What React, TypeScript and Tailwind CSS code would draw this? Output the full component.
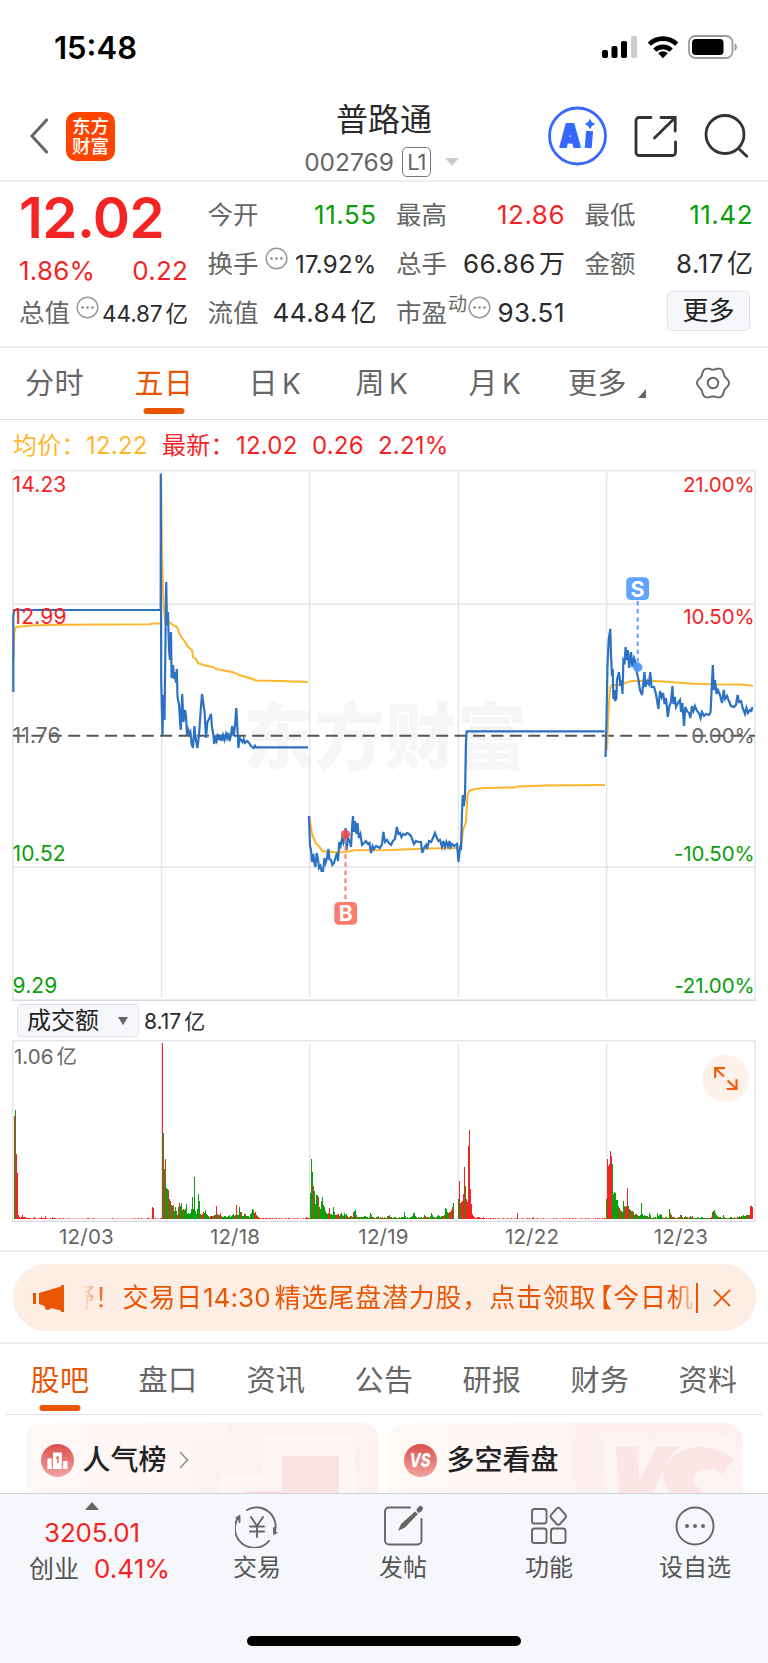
import type { ReactNode } from "react";

type Tone = "up" | "down" | "plain";
type ValueSize = "sm" | "md" | "lg";

const TONE_CLASS: Record<Tone, string> = {
  up: "text-[#f52424]",
  down: "text-[#0a9e0a]",
  plain: "text-[#2b2b2b]",
};

const SIZE_CLASS: Record<ValueSize, string> = {
  sm: "pt-[3px] text-[22.5px] tracking-[-0.1px]",
  md: "pt-[3px] text-[24px] tracking-[0.2px]",
  lg: "text-[26px] tracking-[0.5px]",
};

const UP = "#f52424";
const DOWN = "#0a9e0a";
const GRID = "#e3e6ee";
const DAY_LINES = [161.5, 309.7, 458.3, 606.7];

const PRICE_LINES = [
  "13.3,692 13.3,616 14.3,610 160.7,610 160.8,473.5 161.2,680 162.5,735 163.4,695 164.5,720 166.2,582 167,625 168,612 169,650 170,660 171,632 171.6,678 173,665 174,679 175,672 176,683 176.8,669 177.5,697 179,705 180.7,730 182.2,694 183.4,722 185,710 186,716 187,735 188.2,730 189.4,734 190.4,732 191.6,744 193,748 194.4,726 195.6,738 197.4,748 199,735 200.6,712 202,694 203.4,704 204.6,712 206,738 207.4,722 209.5,718 211,714 212,727 213.5,736 214.2,744 215.4,738 216.6,741 217.8,734 219,740 220.4,735 221.5,741 223,735 224.4,740 226,734 227,738 228.4,733 229.6,741 231,735 232.2,726 233.6,736 234.8,728 236.3,708 237.4,728 238.4,748 239.6,738 241,740 242.6,742 243.8,739 245,743 247,741 249,743 251,746 253.6,748 255,745.6 256,747.4 308,747.4",
  "309,816 310,846 311,850 312,862 313.2,854 314.5,863 315.4,867 316.6,853 317.8,858 319,868 320.4,866 321.5,871 323,871 324.4,858 325.6,863 327,858 328.4,849 329.4,859 331,860 332.4,865 334,863 335.4,858 337,853 338,861 339.2,842 340.6,846 342,839 343.4,843 345,836 345.6,828 346.6,850 348,838 350,842 351,847 352.2,825 353,816 353.8,832 355,821 356.4,834 357.6,823 358.8,838 360.4,834 362,845 364,843 366,841 368,844 369.4,843 371,853 372.6,846 374,849 376,846 378,847 380,848 382,844 383.4,832 385,842 387,840 389,843 391,845 393,841 395,839 396.8,827 398.5,834 400,833 401.4,837 403,834 405,835 407,833 409,834 411,836 414,844 416,841 418,842 421,842 422.2,853 424,848 426,845 427,849 429,841 431,842 433,838 435,833 437,838 438.4,841 440,840 442,847 443.4,841 445,847 446.4,842 448,846 449.4,841 450.6,847 452,844 454,846 457,844 458.5,862 460,848 461,850 462,812 462.8,795 463.8,806 465,796 466,742 466.7,731.3 604.6,731.3",
  "605.5,757 606.5,720 607.5,665 608.7,640 610.3,629 611,655 612,676 612.7,669 613.4,699 614.4,690 615,701 616.4,698 617,680 619,672 620.4,686 621.4,680 622.5,694 623.4,660 624.6,662 625.6,647 626.6,660 627.8,650 629.2,668 631,652 632.4,667 634,658 635.4,662 637,673 638.5,680 640,690 642,695 643.5,682 644.5,672 645.5,687 647.5,681 649,684 650.2,672 651.6,687 654,687 656,694 658.4,709 660,691 661.6,697 663,693 664.6,704 666,698 667.8,717 669.4,706 671,702 672.4,686 673.4,704 674.8,697 676,707 678,703 680,700 681,712 682.4,703 684,726 685.4,707 687,711 689,713 690.4,718 692,706 693.4,711 695,706 697,711 699,713 700.5,718 702,712 704,716 706,714 709,715 710.6,712 711.6,690 712.8,665 713.8,690 715,680 716.5,694 718,690 720,695 722,703 723.8,690 725,699 727,696 728.5,700 731,706 734,707 736,705 737.6,695 739,702 741,701 743,709 745,714 746.4,708 748,713 750,710 751.4,711 752.4,707",
];

const AVERAGE_LINES = [
  "13.5,660 14.3,632 16,627 30,625.5 60,624.8 150,624.3 153,623.5 160,623.5",
  "161,475 162,560 163.5,600 165,622 169,622 173,625 177,627 180,635 185,642 188,647 192,650 193,657 196,659 198,663 205,665.5 213,667 216,669 232,672 242,676 250,678 256,680.5 280,681 308,682",
  "309.5,818 312,834 316,844 319,846 322,851 327,851.5 335,852.3 345,852 355,850.3 390,850 430,848.5 458,848",
  "461,848 463,830 466,822 467.5,795 469,791 475,789 485,788 515,787.4 517,786.5 545,785.5 605,785",
  "607,750 608,720 609.5,695 610.5,687 612,685 622,685 625,683 628,682 632,681 655,681 670,682 690,683.5 710,684.3 740,684.5 747,685 753,686",
];

// One bar per pixel, colour letter first, then its height.
const VOLUME_RUNS: { start: number; bars: string }[] = [
  {
    start: 14,
    bars: "r103 g109 r65 r46 r4 r2 r1 r2 r4 r2 r2 r2 r1 r1 r1 r1 r1 r0 r0 r1 r2 r1 r0 r0 r0 r1 r1 r2 r1 r1 r1 r3 r1 r0 r0 r0 r1 r0 r2 r1 r1 r1 r0 r0 r0 r1 r0 r0 r0 r1 r0 r0 r0 r0 r1 r0 r0 r0 r0 r0 r0 r0 r0 r0 r0 r0 r0 r0 r0 r0 r0 r0 r0 r1 r1 r0 r0 r0 r0 r1 r0 r0 r0 r0 r0 r0 r0 r0 r0 r0 r0 r0 r0 r0 r0 r0 r0 r0 r1 r0 r0 r0 r0 r0 r0 r0 r0 r0 r0 r0 r0 r0 r0 r0 r0 r0 r0 r0 r0 r0 r1 r0 r0 r0 r1 r0 r0 r1 r0 r0 r0 r0 r0 r1 r1 r0 r0 r0 r12 r11 r0 r1 r0 r0 r0 r0 r1 r1",
  },
  {
    start: 162,
    bars: "r176 g86 g50 r60 g31 g30 r29 g20 r18 g14 g13 r14 g8 g12 g8 r4 g12 r16 g13 g16 g9 r10 g9 g10 g15 g5 g6 g5 g6 g10 g22 g10 g42 g8 g5 g10 g25 g18 g5 r4 r5 r7 g6 g9 g5 g4 g3 g2 r3 r3 g3 r3 g4 r4 r13 g5 r4 g4 r6 g3 g2 g2 g3 g3 g2 g2 g3 g4 g2 g3 g4 g5 r3 g4 r14 g4 g4 g12 r7 g7 g3 g3 r5 g5 g3 g3 g3 g2 g5 g6 g10 g9 r6 r7 g4 r3 r2 r1 r1 r0 r1 r1 r0 r1 r1 r1 r0 r1 r1 r0 r1 r0 r1 r0 r1 r0 r0 r1 r0 r1 r0 r0 r0 r1 r0 r0 r1 r1 r0 r0 r0 r0 r1 r0 r0 r1 r0 r0 r0 r0 r0 r1 r0 r1 r2 r1 r1 r1",
  },
  {
    start: 310,
    bars: "g26 g60 g47 r33 g28 g15 g24 g24 r22 g12 g10 g18 g22 g14 g12 g8 g6 g5 r6 r11 g5 g5 g4 g12 g7 g4 r4 r5 r5 g3 g5 g6 g4 r3 g6 g4 g5 r3 r2 g2 r3 g3 g2 r7 g8 g9 g4 r2 g2 g2 r2 g2 g2 g2 g3 g3 g2 g2 r1 g2 g6 g4 g2 r2 r1 g1 r2 g2 g3 r1 g2 g1 r2 r1 g2 r1 g1 g3 r3 g4 g2 r2 g1 g1 g2 g2 g1 g1 r1 g2 g1 g2 g2 g2 g7 g3 g1 g2 r1 g1 g2 g2 g3 g6 g6 g3 g2 r1 g2 g1 r2 g2 g1 g2 g4 r3 r2 g2 r2 g1 g3 g6 g4 g2 r2 g1 g2 g3 g4 g3 g2 g3 g3 r3 r4 g11 g10 g7 g6 r7 r7 r9 r12 g16",
  },
  {
    start: 458,
    bars: "g20 r38 g16 r17 r18 r25 r52 g33 r20 r17 r73 r89 r30 r15 r5 r3 r2 r1 r1 r2 r2 r2 r1 r1 r1 r2 r1 r0 r1 r0 r1 r0 r1 r1 r0 r1 r0 r1 r0 r0 r1 r0 r0 r0 r0 r1 r0 r0 r0 r1 r0 r0 r0 r1 r0 r0 r0 r0 r1 r6 r0 r0 r0 r0 r1 r0 r0 r0 r0 r1 r0 r1 r0 r0 r1 r2 r0 r0 r0 r1 r0 r0 r0 r0 r0 r1 r0 r0 r0 r0 r0 r0 r0 r0 r0 r1 r0 r0 r1 r0 r0 r0 r0 r0 r0 r1 r0 r0 r1 r0 r0 r1 r0 r0 r1 r0 r0 r1 r0 r0 r0 r0 r0 r1 r0 r0 r0 r1 r0 r0 r1 r0 r0 r0 r0 r0 r0 r1 r0 r1 r0 r1 r0 r0 r1 r0 r1 r1",
  },
  {
    start: 606,
    bars: "g20 r60 r53 r55 r68 r63 g55 g25 g27 g26 g19 g19 g13 r11 r9 g8 g7 g18 g13 r12 r13 r31 g13 r10 g9 r8 g8 r7 g4 g5 r5 g4 g3 g3 g4 g16 g5 g3 g4 g3 r3 g3 g2 g6 g4 g1 r1 g2 g1 g2 g1 g6 g3 g4 g5 g4 g2 r1 g1 r2 g2 r1 g1 g10 r6 g4 g2 r2 r2 g1 g1 r1 g2 r2 r4 g4 g2 g1 r2 g3 r2 g2 r1 r2 g3 g2 r3 g1 g1 g1 g1 g2 g1 g1 g1 g2 g2 g1 g1 g1 r1 g1 g1 g1 r1 r2 r7 g8 g9 g6 g4 g3 g2 r2 g2 g1 g1 g4 g2 r1 g1 g1 g1 r1 g2 g2 g1 g1 r2 g1 g1 r2 g2 g3 g2 r3 g3 g4 g3 g3 r4 g4 r4 g4 r13 r13 r12",
  },
];

// Six-lobed outline of the settings icon
function cogPath() {
  const points: string[] = [];
  for (let deg = 0; deg < 360; deg += 5) {
    const a = (deg * Math.PI) / 180;
    const r = 14.7 + 1.3 * Math.cos(6 * a);
    points.push(`${(18 + r * Math.cos(a)).toFixed(2)} ${(18 + r * Math.sin(a)).toFixed(2)}`);
  }
  return `M${points.join("L")}Z`;
}

function StatusBar() {
  return (
    <div className="flex h-[95px] items-center justify-between pb-px pl-[54px] pr-[30px]">
      <span className="text-[31px] font-semibold leading-none text-black">15:48</span>
      <div className="flex items-center gap-[9px]">
        <svg width="37" height="24" viewBox="0 0 37 24">
          <rect x="1" y="15" width="6" height="8" rx="1.8" />
          <rect x="10.5" y="11" width="6" height="12" rx="1.8" />
          <rect x="20" y="6" width="6" height="17" rx="1.8" />
          <rect x="30" y="1" width="6" height="22" rx="1.8" fill="#ccc" />
        </svg>
        <svg width="32" height="24" viewBox="0 0 32 24" fill="none" stroke="#000" strokeWidth="4.6">
          <path d="M2.3 9.2a19.6 19.6 0 0 1 27.4 0" />
          <path d="M7.8 15.2a11.8 11.8 0 0 1 16.4 0" />
          <path d="M16 23.2l-4.8-4.9a6.8 6.8 0 0 1 9.6 0z" fill="#000" stroke="none" />
        </svg>
        <svg width="50" height="24" viewBox="0 0 50 24">
          <rect x="1" y="1" width="43.5" height="22" rx="6.5" fill="none" stroke="#9b9b9b" strokeWidth="1.8" />
          <rect x="4" y="4" width="31.5" height="16" rx="3.8" />
          <path d="M46.6 8c3 .8 3 7.2 0 8z" fill="#9b9b9b" />
        </svg>
      </div>
    </div>
  );
}

function Header() {
  return (
    <header className="grid h-[87px] grid-cols-[1fr_auto_1fr] items-center border-b-2 border-[#eeeeef]">
      <div className="flex items-center pb-[5px] pl-[29px]">
        <svg width="20" height="38" viewBox="0 0 20 38" fill="none" stroke="#666" strokeWidth="3">
          <path d="M18.5 2L3 19l15.5 17" />
        </svg>
        <div className="ml-[17px] flex h-[49px] w-[49px] flex-col items-center justify-center rounded-[10px] bg-[#ff4400] pb-px text-[18.5px] font-medium leading-[20px] text-white">
          <span>东方</span>
          <span>财富</span>
        </div>
      </div>
      <div className="flex w-[160px] flex-col items-center pt-[6px]">
        <h1 className="text-[32px] leading-[38px] text-[#2b2b2b]">普路通</h1>
        <div className="mr-[5px] mt-[3px] flex h-[40px] items-center whitespace-nowrap text-[#666]">
          <span className="text-[24.5px] leading-none">002769</span>
          <span className="ml-[8px] flex h-[30px] w-[29px] items-center justify-center rounded-[5px] border-[1.5px] border-[#777] text-[22px] leading-none tracking-[-1px]">
            L1
          </span>
          <span className="ml-[14px] border-x-[7px] border-t-[8px] border-x-transparent border-t-[#ccc]" />
        </div>
      </div>
      <div className="flex items-center justify-end pb-[5px] pr-[19px]">
        <svg width="60" height="60" viewBox="0 0 60 60">
          <circle cx="30.5" cy="30" r="28" fill="none" stroke="#3568ff" strokeWidth="2.8" />
          <text
            x="12.5"
            y="40.5"
            fill="#3568ff"
            stroke="#3568ff"
            strokeWidth="2"
            strokeLinejoin="round"
            fontSize="31"
            className="font-black"
            textLength="21"
            lengthAdjust="spacingAndGlyphs"
          >
            A
          </text>
          <path d="M42.3 28.5l-.8 10" stroke="#3568ff" strokeWidth="7" strokeLinecap="square" />
          <path
            d="M43 13.5q1 4 4.5 4.5-3.5 1-4.500 4.500-1-3.500-4.500-4.500 3.500-1 4.500-4.500z"
            fill="#3568ff"
            stroke="#3568ff"
            strokeWidth="1"
          />
        </svg>
        <svg className="ml-[27px]" width="44" height="44" viewBox="0 0 44 44" fill="none" stroke="#333" strokeWidth="2.8">
          <path
            d="M17 3.5H5a3 3 0 0 0-3 3v32a3 3 0 0 0 3 3h33.5a3 3 0 0 0 3-3V28M27 3.5h14.2V17M40.5 4.3L20.5 24"
            strokeLinecap="round"
          />
        </svg>
        <svg className="ml-[25px]" width="46" height="46" viewBox="0 0 46 46" fill="none" stroke="#333" strokeWidth="2.8">
          <circle cx="22" cy="21.5" r="19" />
          <path d="M35.5 35.5l8.3 7.8" strokeLinecap="round" />
        </svg>
      </div>
    </header>
  );
}

function InfoDots() {
  return (
    <svg className="-mt-[11px]" width="23" height="23" viewBox="0 0 23 23">
      <circle cx="11.5" cy="11.5" r="10.3" fill="none" stroke="#999" strokeWidth="1.5" />
      <circle cx="6.5" cy="11.5" r="1.3" fill="#888" />
      <circle cx="11.5" cy="11.5" r="1.3" fill="#888" />
      <circle cx="16.5" cy="11.5" r="1.3" fill="#888" />
    </svg>
  );
}

interface QuoteCellProps {
  label: string;
  value: string;
  unit?: string;
  tone?: Tone;
  size?: ValueSize;
  note?: string;
  info?: boolean;
}

function QuoteCell({ label, value, unit, tone = "plain", size = "lg", note, info }: QuoteCellProps) {
  return (
    <div className="flex h-[49px] items-center justify-between whitespace-nowrap leading-none">
      <div className="flex items-center text-[25.5px] text-[#666]">
        <span>{label}</span>
        {note && <span className="-mt-[16px] ml-[1px] text-[19px]">{note}</span>}
        {info && (
          <span className={note ? "ml-[1px]" : "ml-[6px]"}>
            <InfoDots />
          </span>
        )}
      </div>
      <div className={`flex items-center ${TONE_CLASS[tone]} ${SIZE_CLASS[size]}`}>
        <span>{value}</span>
        {unit && <span className="ml-[3px] tracking-normal">{unit}</span>}
      </div>
    </div>
  );
}

function QuotePanel() {
  return (
    <section className="flex h-[166px] gap-[19.5px] border-b-2 border-[#eeeeef] pl-[19px] pt-[8px]">
      <div className="w-[169px] shrink-0">
        <div className="flex h-[57px] items-center text-[56.5px] font-semibold leading-none tracking-[-0.6px] text-[#f52424]">
          12.02
        </div>
        <div className="flex h-[41px] items-center justify-between pt-[7px] text-[26px] leading-none tracking-[0.2px] text-[#f52424]">
          <span>1.86%</span>
          <span>0.22</span>
        </div>
        <QuoteCell label="总值" value="44.87" unit="亿" info size="sm" />
      </div>
      <div className="w-[169px] shrink-0">
        <QuoteCell label="今开" value="11.55" tone="down" />
        <QuoteCell label="换手" value="17.92%" info size="md" />
        <QuoteCell label="流值" value="44.84" unit="亿" />
      </div>
      <div className="w-[169px] shrink-0">
        <QuoteCell label="最高" value="12.86" tone="up" />
        <QuoteCell label="总手" value="66.86" unit="万" />
        <QuoteCell label="市盈" value="93.51" note="动" info />
      </div>
      <div className="w-[168.5px] shrink-0">
        <QuoteCell label="最低" value="11.42" tone="down" />
        <QuoteCell label="金额" value="8.17" unit="亿" />
        <div className="flex h-[49px] items-center justify-end pb-[3px] pr-[3px]">
          <button
            type="button"
            className="h-[40px] w-[83px] rounded-[5px] border-[1.5px] border-[#dfe2ea] bg-[#f6f7fa] text-[26px] leading-none text-[#222]"
          >
            更多
          </button>
        </div>
      </div>
    </section>
  );
}

function PeriodTab({ width, active, children }: { width: string; active?: boolean; children: ReactNode }) {
  return (
    <div
      className={`relative flex items-center justify-center text-[29px] leading-none ${width} ${
        active ? "text-[#ea5504]" : "text-[#666]"
      }`}
    >
      <span className="tracking-[0.6px]">{children}</span>
      {active && (
        <span className="absolute bottom-[5px] left-1/2 h-[6px] w-[41px] -translate-x-1/2 rounded-full bg-[#ea5504]" />
      )}
    </div>
  );
}

function PeriodTabs() {
  return (
    <nav className="flex h-[72px] border-b-[1.5px] border-[#dcdee5]">
      <PeriodTab width="w-[109px]">分时</PeriodTab>
      <PeriodTab width="w-[110px]" active>五日</PeriodTab>
      <PeriodTab width="w-[112px]">
        日<span className="ml-[4px] text-[28px]">K</span>
      </PeriodTab>
      <PeriodTab width="w-[102px]">
        周<span className="ml-[4px] text-[28px]">K</span>
      </PeriodTab>
      <PeriodTab width="w-[124px]">
        月<span className="ml-[4px] text-[28px]">K</span>
      </PeriodTab>
      <PeriodTab width="w-[81px]">更多</PeriodTab>
      <div className="flex flex-1 items-center">
        <svg className="mt-[20px]" width="8" height="9" viewBox="0 0 8 9" fill="#666">
          <path d="M8 0v9H0z" />
        </svg>
        <svg className="-mt-px ml-[48.5px]" width="36" height="36" viewBox="0 0 36 36" fill="none" stroke="#666" strokeWidth="1.9">
          <path d={cogPath()} strokeLinejoin="round" />
          <circle cx="18" cy="18" r="5.3" />
        </svg>
      </div>
    </nav>
  );
}

function AxisLabel({ x, y, color, end, children }: { x: number; y: number; color: string; end?: boolean; children: ReactNode }) {
  return (
    <text
      x={x}
      y={y}
      fill={color}
      fontSize={end ? 20.5 : 21}
      letterSpacing={end ? -0.1 : 0.15}
      textAnchor={end ? "end" : "start"}
    >
      {children}
    </text>
  );
}

function PriceChart() {
  return (
    <svg className="block" width="768" height="536" viewBox="0 466 768 536">
      <text
        x="243"
        y="763"
        fill="#f6f6f7"
        fontSize="72"
        className="font-black"
        textLength="284"
        lengthAdjust="spacingAndGlyphs"
      >
        东方财富
      </text>
      <g stroke={GRID} strokeWidth="1.5" fill="none">
        <path d="M12.8 470.8H755V1000M12.8 470.8V1000M13 604.3H755M13 867H755" />
        {DAY_LINES.map((x) => (
          <path key={x} d={`M${x} 472.5V998`} />
        ))}
      </g>
      <path d="M12 1000.3H755.7" stroke="#d5d9e0" strokeWidth="1.5" />
      <path d="M13 735.8H755" stroke="#555" strokeWidth="1.9" strokeDasharray="12 6.4" />
      <g fill="none" stroke="#ffb62e" strokeWidth="2.1" strokeLinejoin="round">
        {AVERAGE_LINES.map((points) => (
          <polyline key={points} points={points} />
        ))}
      </g>
      <g fill="none" stroke="#2d72c2" strokeWidth="2.2" strokeLinejoin="miter">
        {PRICE_LINES.map((points) => (
          <polyline key={points} points={points} />
        ))}
      </g>
      <AxisLabel x={12.5} y={491.5} color={UP}>14.23</AxisLabel>
      <AxisLabel x={12.5} y={623.5} color={UP}>12.99</AxisLabel>
      <AxisLabel x={12.5} y={742.5} color="#666">11.76</AxisLabel>
      <AxisLabel x={12.5} y={860.5} color={DOWN}>10.52</AxisLabel>
      <AxisLabel x={12.5} y={993} color={DOWN}>9.29</AxisLabel>
      <AxisLabel x={754.5} y={491.5} color={UP} end>21.00%</AxisLabel>
      <AxisLabel x={754.5} y={623.5} color={UP} end>10.50%</AxisLabel>
      <AxisLabel x={754.5} y={742.5} color="#666" end>0.00%</AxisLabel>
      <AxisLabel x={754.5} y={860.5} color={DOWN} end>-10.50%</AxisLabel>
      <AxisLabel x={754.5} y={993} color={DOWN} end>-21.00%</AxisLabel>

      <path d="M345.5 838V901" stroke="#fb7868" strokeWidth="2" strokeDasharray="4.5 3.6" />
      <circle cx="345.5" cy="834.5" r="4.7" fill="#e5504f" fillOpacity="0.9" />
      <rect x="334.3" y="902" width="22.8" height="22.8" rx="4.5" fill="#fc7b6a" />
      <text x="345.6" y="921" fill="#fff" fontSize="21" fontWeight="700" textAnchor="middle">B</text>

      <path d="M637.7 601V667" stroke="#5aa0ff" strokeWidth="2" strokeDasharray="4.5 3.6" />
      <circle cx="637.7" cy="667.3" r="4.7" fill="#4b94fb" fillOpacity="0.9" />
      <rect x="626.2" y="577.3" width="22.8" height="22.8" rx="4.5" fill="#5ea3ff" />
      <text x="637.6" y="596.5" fill="#fff" fontSize="21.5" fontWeight="700" textAnchor="middle">S</text>
    </svg>
  );
}

function VolumeChart() {
  return (
    <svg className="block" width="768" height="212" viewBox="0 1038 768 212">
      <g stroke={GRID} strokeWidth="1.5" fill="none">
        <path d="M12.8 1221V1040.7H755V1221" />
        {DAY_LINES.map((x) => (
          <path key={x} d={`M${x} 1043V1219`} />
        ))}
      </g>
      <path d="M12 1221.3H755.7" stroke="#d5d9e0" strokeWidth="1.2" />
      <g shapeRendering="crispEdges">
        {VOLUME_RUNS.map(({ start, bars }) =>
          bars.split(" ").map((bar, i) => {
            const height = Number(bar.slice(1));
            return (
              <rect
                key={start + i}
                x={start + i}
                y={1219 - Math.max(height, 1)}
                width="1"
                height={Math.max(height, 1)}
                fill={bar[0] === "r" ? UP : DOWN}
                fillOpacity={height === 0 ? 0.3 : 1}
              />
            );
          }),
        )}
      </g>
      <text x="14" y="1063.5" fill="#666" fontSize="20.5">
        1.06<tspan dx="3">亿</tspan>
      </text>
      <g fill="#666" fontSize="20.5" letterSpacing="0.2" textAnchor="middle">
        <text x="86.5" y="1244">12/03</text>
        <text x="235" y="1244">12/18</text>
        <text x="383.5" y="1244">12/19</text>
        <text x="532" y="1244">12/22</text>
        <text x="681" y="1244">12/23</text>
      </g>
      <circle cx="725.5" cy="1078.5" r="23.5" fill="#fef1ea" />
      <path
        d="M724 1076.5L715.5 1068.5M725 1068.2H715.2V1078M727.5 1080.5L736 1088.5M726.7 1089H736.5V1079.2"
        fill="none"
        stroke="#f25c0c"
        strokeWidth="2.2"
      />
    </svg>
  );
}

function ChartSection() {
  return (
    <section className="h-[832px] border-b-2 border-[#eeeeef]">
      <div className="flex h-[46px] items-center whitespace-nowrap pl-[13px] pt-[6px] text-[24px] leading-none tracking-[0.2px] text-[#f52424]">
        <span className="w-[73px] text-[#ffb62e]">均价：</span>
        <span className="w-[76px] text-[#ffb62e]">12.22</span>
        <span className="w-[74px]">最新：</span>
        <span className="w-[76px]">12.02</span>
        <span className="w-[66px]">0.26</span>
        <span>2.21%</span>
      </div>
      <PriceChart />
      <div className="flex h-[36px] items-center gap-[5px] pl-[17px] pt-px">
        <div className="flex h-[33px] w-[122px] items-center justify-between rounded-[4px] border-[1.5px] border-[#dfe2ea] bg-[#f6f7fa] pl-[9px] pr-[10px] text-[24px] leading-none text-[#222]">
          <span className="pt-px">成交额</span>
          <span className="border-x-[5px] border-t-[8px] border-x-transparent border-t-[#666]" />
        </div>
        <span className="pt-px text-[21px] leading-none text-[#2b2b2b]">
          8.17<span className="ml-[3px]">亿</span>
        </span>
      </div>
      <VolumeChart />
    </section>
  );
}

function Notice() {
  return (
    <div className="h-[92px] border-b-2 border-[#eeeeef] px-[12.5px] pt-[12px]">
      <div className="flex h-[67px] items-center rounded-[33px] bg-[#fdeee5] pl-[20px] text-[#ea5504]">
        <svg width="32" height="28" viewBox="0 0 32 28" fill="currentColor">
          <path d="M0 9h3v11H0zM6 9L28 2.5V1h3v27h-3v-1.5l-10-2.5q-1 2-3.5 2t-3-4L6 20z" />
        </svg>
        <div className="ml-[18px] flex h-[34px] w-[613px] items-center overflow-hidden whitespace-nowrap text-[26px] leading-none [mask-image:linear-gradient(to_right,transparent,black_22px,black_592px,transparent_616px)]">
          <span className="-ml-[14px]">野！</span>
          <span className="ml-[2px] tracking-[0.8px]">
            交易日<span className="tracking-[0.1px]">14:30</span>
            <span className="ml-[4px]">精选尾盘潜力股，点击领取</span>
            <span className="-ml-[10px]">【今日机</span>
          </span>
        </div>
        <span className="h-[30px] w-[2px] bg-[#ea5504]" />
        <svg className="ml-[15px]" width="18" height="18" viewBox="0 0 19 19" fill="none" stroke="currentColor" strokeWidth="2">
          <path d="M1 1l17 17M18 1L1 18" />
        </svg>
      </div>
    </div>
  );
}

const SECTION_TABS = ["股吧", "盘口", "资讯", "公告", "研报", "财务", "资料"];

function SectionTabs() {
  return (
    <nav className="mx-[6px] grid h-[71px] grid-cols-7 border-b-[1.5px] border-[#dfe1ea]">
      {SECTION_TABS.map((tab, i) => (
        <div
          key={tab}
          className={`relative flex items-center justify-center pt-[2px] text-[29px] leading-none tracking-[0.6px] ${
            i === 0 ? "text-[#ea5504]" : "text-[#666]"
          }`}
        >
          {tab}
          {i === 0 && (
            <span className="absolute bottom-[3px] left-1/2 h-[6px] w-[41px] -translate-x-1/2 rounded-full bg-[#ea5504]" />
          )}
        </div>
      ))}
    </nav>
  );
}

function Cards() {
  return (
    <section className="flex h-[78px] gap-[9px] overflow-hidden px-[25px] pt-[8px]">
      <div className="relative h-[100px] w-[354px] overflow-hidden rounded-[18px] bg-gradient-to-r from-[#fef8f6] to-[#fef3f1]">
        <svg className="absolute left-0 top-0" width="354" height="70" viewBox="0 0 354 70">
          <path d="M169 70V16h34V0h151v70z" fill="#fdf2f0" />
          <path d="M195 70V53h41l5-41h86l5 58z" fill="#fef7f5" />
          <path d="M220 70v-2h37V33h57v37z" fill="#fbe3e2" />
        </svg>
        <div className="relative flex h-[74px] items-center pl-[16px]">
          <svg width="33" height="33" viewBox="0 0 33 33">
            <defs>
              <linearGradient id="rank" x1="0" y1="0" x2="0" y2="1">
                <stop offset="0" stopColor="#dc4f4d" />
                <stop offset="1" stopColor="#f0a5a2" />
              </linearGradient>
            </defs>
            <circle cx="16.5" cy="16.5" r="16.5" fill="url(#rank)" />
            <path d="M6.500 14.500h4.200v10.500H6.500zM12 8.500h8.800v16.500H12zM22.200 17h4.300v8h-4.300z" fill="#fff" />
            <path d="M15 14l2-1v6" fill="none" stroke="#dd6462" strokeWidth="1.4" />
          </svg>
          <span className="ml-[8.5px] text-[28px] font-medium leading-none text-[#222]">人气榜</span>
          <svg className="ml-[12px]" width="10" height="18" viewBox="0 0 10 18" fill="none" stroke="#999" strokeWidth="1.8">
            <path d="M1 1l7.5 8L1 17" />
          </svg>
        </div>
      </div>
      <div className="relative h-[100px] w-[355px] overflow-hidden rounded-[18px] bg-gradient-to-r from-[#fef8f6] to-[#fef3f1]">
        <svg className="absolute left-0 top-0" width="355" height="70" viewBox="0 0 355 70">
          <path d="M180 0H355v70H188z" fill="#fdf0ee" />
          <path d="M213 10h45l6 20 12-20h50q20 5 29 15v45H219z" fill="#fef4f2" />
          <path d="M228 24h21l2 34 18-34h22q-10 10-14 20l-12 26h-34z" fill="#fbe6e5" />
          <path d="M346 37l-12 14q-13-8-24-2-8 6-2 13l6 8h-32q-14-18 0-33 12-13 30-13 22 1 34 13z" fill="#fbe6e5" />
        </svg>
        <div className="relative flex h-[74px] items-center pl-[16px]">
          <svg width="33" height="33" viewBox="0 0 33 33">
            <circle cx="16.5" cy="16.5" r="16.5" fill="url(#rank)" />
            <text x="16" y="23" fill="#fff" fontSize="19" fontWeight="800" fontStyle="italic" textAnchor="middle" textLength="21" lengthAdjust="spacingAndGlyphs">
              VS
            </text>
          </svg>
          <span className="ml-[9.5px] text-[28px] font-medium leading-none text-[#222]">多空看盘</span>
        </div>
      </div>
    </section>
  );
}

function NavItem({ label, children }: { label: string; children: ReactNode }) {
  return (
    <div className="flex w-[146px] flex-col items-center pt-[10px]">
      <svg width="44" height="44" viewBox="0 0 44 44" fill="none" stroke="#666" strokeWidth="1.9" strokeLinecap="round" strokeLinejoin="round">
        {children}
      </svg>
      <span className="mt-[8px] text-[24px] leading-none text-[#555]">{label}</span>
    </div>
  );
}

function BottomBar() {
  return (
    <footer className="flex h-[170px] flex-col border-t-[1.5px] border-[#d0d3dc] bg-[#f6f7fa]">
      <div className="flex h-[140px]">
        <div className="flex w-[184px] flex-col items-center pt-[8px] text-[26px] leading-none text-[#f52424]">
          <span className="border-x-[7px] border-b-[8px] border-x-transparent border-b-[#666]" />
          <span className="mt-[10px] tracking-[-0.2px]">3205.01</span>
          <div className="mt-[10px] flex items-center gap-[15px] pl-[15px]">
            <span className="text-[25px] text-[#555]">创业</span>
            <span className="tracking-[0.1px]">0.41%</span>
          </div>
        </div>
        <NavItem label="交易">
          <path d="M12 6a19 19 0 0 1 27 24l2.5-1.5M39 30v-6M34 37A19 19 0 0 1 4.5 12L1.500 14M4.500 12v6" />
          <path d="M16 13l6 9 6-9M15 22.500h14M15 27.500h14M22 22v11" />
        </NavItem>
        <NavItem label="发帖">
          <path d="M29 3.500H8a4 4 0 0 0-4 4v29a4 4 0 0 0 4 4h28.500a4 4 0 0 0 4-4V15" />
          <path d="M17 27l3-7L34 7.500l3 2.500-13 13.500z" fill="#666" stroke="none" />
          <path d="M38 6l1.500-1.500" strokeWidth="5" />
        </NavItem>
        <NavItem label="功能">
          <rect x="5" y="5" width="14.5" height="14.5" rx="2.5" />
          <rect x="5" y="24.5" width="14.5" height="14.5" rx="2.5" />
          <rect x="24" y="24.5" width="14.5" height="14.5" rx="2.5" />
          <path d="M29.6 4.6q1.7-1.5 3.4 0l5.3 6q1.4 1.7 0 3.4l-5.3 6q-1.7 1.5-3.4 0l-5.3-6q-1.4-1.7 0-3.4z" />
        </NavItem>
        <NavItem label="设自选">
          <circle cx="22" cy="22" r="18.5" />
          <path d="M14 22h.01M22 22h.01M30 22h.01" strokeWidth="4" />
        </NavItem>
      </div>
      <div className="mx-auto mt-[2px] h-[10px] w-[274px] rounded-full bg-black" />
    </footer>
  );
}

export default function App() {
  return (
    <div className="h-[1663px] w-[768px] overflow-hidden bg-white [font-family:Inter,'Noto_Sans_CJK_SC',sans-serif]">
      <StatusBar />
      <Header />
      <QuotePanel />
      <PeriodTabs />
      <ChartSection />
      <Notice />
      <SectionTabs />
      <Cards />
      <BottomBar />
    </div>
  );
}
